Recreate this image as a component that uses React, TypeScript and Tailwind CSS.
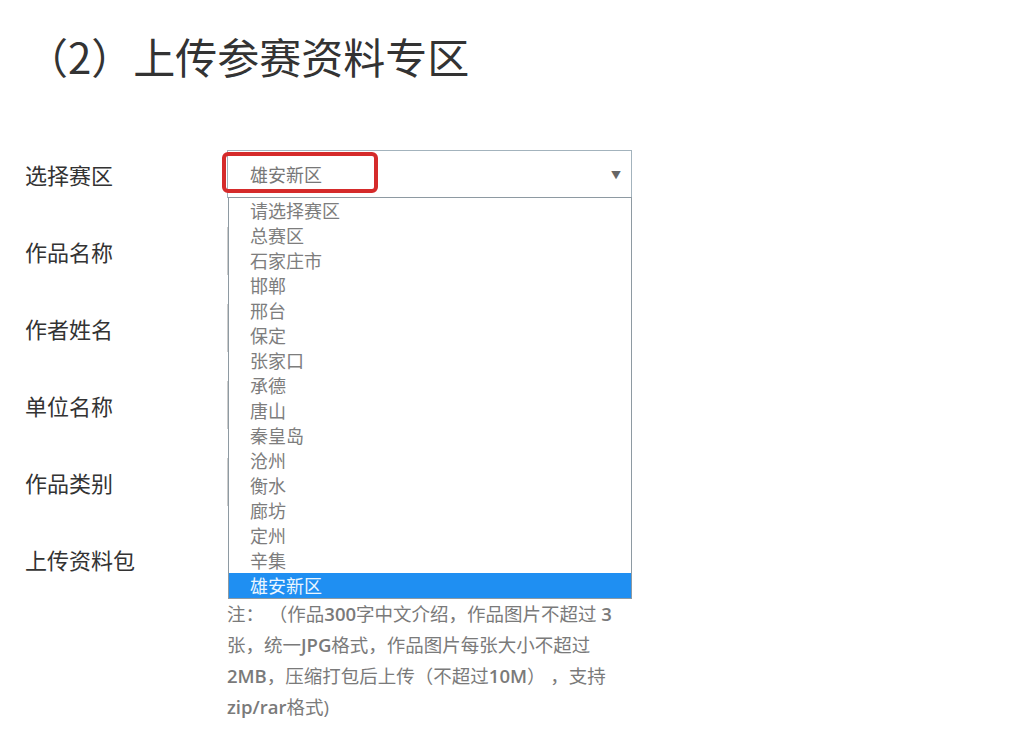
import React from "react";

const options = [
  "请选择赛区",
  "总赛区",
  "石家庄市",
  "邯郸",
  "邢台",
  "保定",
  "张家口",
  "承德",
  "唐山",
  "秦皇岛",
  "沧州",
  "衡水",
  "廊坊",
  "定州",
  "辛集",
  "雄安新区",
];

const labels = ["作品名称", "作者姓名", "单位名称", "作品类别"];

export default function App() {
  return (
    <div className="w-[1010px] h-[732px] bg-white overflow-hidden font-['Noto_Sans_CJK_SC','Noto_Sans',sans-serif]">
      <h1 className="pl-[26px] pt-[35px] text-[42px] leading-[42px] text-[#333] font-normal">
        （2）上传参赛资料专区
      </h1>

      <div className="mt-[73px] flex flex-col gap-[29px]">
        {/* Row 1: select */}
        <div className="flex items-center h-[48px]">
          <div className="w-[227px] pl-[25px] text-[22px] text-[#333]">选择赛区</div>
          <div className="relative w-[405px] h-[48px]">
            <div className="w-full h-full border border-[#a3b3bd] bg-white flex items-center justify-between pl-[22px] pr-[10px]">
              <span className="text-[18px] text-[#777]">雄安新区</span>
              <span className="text-[10px] text-[#666]">▼</span>
            </div>
            <div className="absolute left-[-5px] top-[2px] w-[156px] h-[41px] border-[4px] border-[#d52b2b] rounded-[6px] z-20" />
            <div className="absolute left-[1px] top-[47px] w-[404px] border border-[#8e9aa2] bg-white z-10">
              {options.map((o, i) => (
                <div
                  key={o}
                  className={
                    i === options.length - 1
                      ? "h-[25px] leading-[25px] pl-[21px] text-[18px] bg-[#1f8ff2] text-[#eaf6ff]"
                      : "h-[25px] leading-[25px] pl-[21px] text-[18px] text-[#7d7d7d]"
                  }
                >
                  {o}
                </div>
              ))}
            </div>
          </div>
        </div>

        {labels.map((l) => (
          <div key={l} className="flex items-center h-[48px]">
            <div className="w-[227px] pl-[25px] text-[22px] text-[#333]">{l}</div>
            <div className="w-[405px] h-[48px] border border-[#ccc]" />
          </div>
        ))}

        <div className="flex items-start">
          <div className="w-[227px] h-[48px] pl-[25px] flex items-center text-[22px] text-[#333]">上传资料包</div>
          <div className="w-[405px] flex flex-col">
            <div className="h-[48px]" />
            <div className="mt-[15px] text-[18.5px] leading-[31px] text-[#7a7a7a] font-['Open_Sans','Noto_Sans_CJK_SC',sans-serif] whitespace-nowrap">
              注： （作品<span className="font-semibold">300</span>字中文介绍，作品图片不超过 <span className="font-semibold">3</span><br />
              张，统一<span className="font-semibold">JPG</span>格式，作品图片每张大小不超过<br />
              <span className="font-semibold">2MB</span>，压缩打包后上传（不超过<span className="font-semibold">10M</span>） ，支持<br />
              <span className="font-semibold">zip/rar</span>格式)
            </div>
          </div>
        </div>
      </div>
    </div>
  );
}
